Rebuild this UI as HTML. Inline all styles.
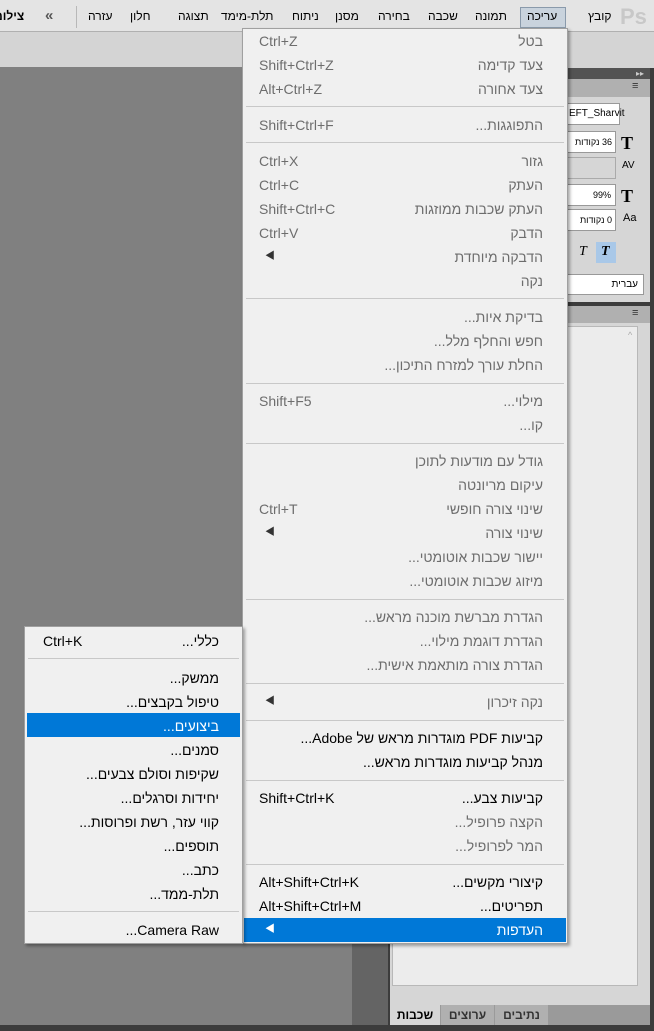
<!DOCTYPE html>
<html><head><meta charset="utf-8"><style>
*{margin:0;padding:0;box-sizing:border-box}
body{width:654px;height:1031px;overflow:hidden;background:#808080;font-family:"Liberation Sans","Noto Sans CJK SC",sans-serif;position:relative}
.abs{position:absolute}
.mb{left:0;top:0;width:654px;height:32px;background:#e4e4e4;border-bottom:1px solid #b0b0b0}
.mb span{position:absolute;top:9px;font-size:12px;color:#000;direction:rtl;white-space:nowrap}
.opt{left:0;top:32px;width:654px;height:37px;background:#d4d4d4}
.menu{background:#f0f0f0;border:1px solid #a0a0a0;box-shadow:2px 2px 3px rgba(0,0,0,.35)}
.it{position:absolute;height:24px;font-size:14px;line-height:24px;white-space:nowrap}
.r{direction:rtl}
.sep{position:absolute;height:1px;background:#c8c8c8}
.hl{position:absolute;background:#0078d7}
</style></head><body>
<div class="abs mb">
<span style="left:620px;top:4px;font-size:22px;color:#c8c8c8;font-weight:bold;direction:ltr">Ps</span>
<span style="left:588px">קובץ</span>
<div class="abs" style="left:520px;top:7px;width:46px;height:21px;background:#c9d3dd;border:1px solid #8a9aab"></div>
<span style="left:527px">עריכה</span>
<span style="left:475px">תמונה</span>
<span style="left:428px">שכבה</span>
<span style="left:378px">בחירה</span>
<span style="left:335px">מסנן</span>
<span style="left:292px">ניתוח</span>
<span style="left:221px">תלת-מימד</span>
<span style="left:178px">תצוגה</span>
<span style="left:130px">חלון</span>
<span style="left:88px">עזרה</span>
<div class="abs" style="left:76px;top:6px;width:1px;height:22px;background:#b8b8b8"></div>
<span style="left:45px;top:7px;font-size:15px;font-weight:bold;color:#555">»</span>
<span style="left:-6px;font-weight:bold">צילומ</span>
</div>
<div class="abs opt"></div>
<div class="abs" style="left:0;top:67px;width:390px;height:964px;background:#808080"></div>
<div class="abs" style="left:352px;top:940px;width:38px;height:91px;background:#646464"></div>
<div class="abs" style="left:388px;top:68px;width:266px;height:963px;background:#3c3c3c"></div>
<div class="abs" style="left:390px;top:68px;width:260px;height:11px;background:#535353"></div>
<div class="abs" style="left:636px;top:69px;font-size:8px;color:#ccc">▸▸</div>
<div class="abs" style="left:390px;top:79px;width:260px;height:18px;background:#b0b0b0"></div>
<div class="abs" style="left:632px;top:80px;font-size:11px;color:#333">≡</div>
<div class="abs" style="left:390px;top:97px;width:260px;height:205px;background:#d6d6d6"></div>
<div class="abs" style="left:566px;top:103px;width:54px;height:22px;background:#fff;border:1px solid #999;font-size:10px;line-height:20px;padding-left:2px">EFT_Sharvit</div>
<div class="abs" style="left:566px;top:131px;width:50px;height:22px;background:#fff;border:1px solid #999;font-size:9px;line-height:20px;direction:rtl;padding-right:3px;overflow:hidden">36 נקודות</div>
<div class="abs" style="left:566px;top:157px;width:50px;height:22px;background:#d6d6d6;border:1px solid #aaa"></div>
<div class="abs" style="left:566px;top:184px;width:50px;height:22px;background:#fff;border:1px solid #999;font-size:9px;line-height:20px;text-align:right;padding-right:4px">99%</div>
<div class="abs" style="left:566px;top:209px;width:50px;height:22px;background:#fff;border:1px solid #999;font-size:9px;line-height:20px;direction:rtl;padding-right:3px;overflow:hidden">0 נקודות</div>
<div class="abs" style="left:621px;top:133px;font:bold 18px 'Liberation Serif',serif">T</div>
<div class="abs" style="left:622px;top:160px;font:10px 'Liberation Sans',sans-serif">AV</div>
<div class="abs" style="left:621px;top:186px;font:bold 18px 'Liberation Serif',serif">T</div>
<div class="abs" style="left:623px;top:212px;font:11px 'Liberation Sans',sans-serif">Aa</div>
<div class="abs" style="left:596px;top:242px;width:20px;height:21px;background:#a9c8e8"></div>
<div class="abs" style="left:601px;top:244px;font:bold italic 14px 'Liberation Serif',serif">T</div>
<div class="abs" style="left:579px;top:244px;font:italic 14px 'Liberation Serif',serif">T</div>
<div class="abs" style="left:566px;top:274px;width:78px;height:21px;background:#fff;border:1px solid #999;font-size:10px;line-height:19px;direction:rtl;padding-right:5px">עברית</div>
<div class="abs" style="left:390px;top:306px;width:260px;height:17px;background:#b0b0b0"></div>
<div class="abs" style="left:632px;top:307px;font-size:11px;color:#333">≡</div>
<div class="abs" style="left:390px;top:323px;width:260px;height:682px;background:#d6d6d6"></div>
<div class="abs" style="left:392px;top:326px;width:246px;height:660px;background:#ececec;border:1px solid #b8b8b8"></div>
<div class="abs" style="left:628px;top:330px;font-size:9px;color:#aaa">^</div>
<div class="abs" style="left:390px;top:1005px;width:260px;height:20px;background:#9a9a9a"></div>
<div class="abs" style="left:390px;top:1005px;width:50px;height:20px;background:#d6d6d6;font:bold 12px sans-serif;line-height:20px;text-align:center;direction:rtl">שכבות</div>
<div class="abs" style="left:441px;top:1005px;width:53px;height:20px;background:#b0b0b0;font:bold 12px sans-serif;line-height:20px;text-align:center;color:#333">ערוצים</div>
<div class="abs" style="left:495px;top:1005px;width:53px;height:20px;background:#b0b0b0;font:bold 12px sans-serif;line-height:20px;text-align:center;color:#333">נתיבים</div>
<div class="abs" style="left:0;top:1025px;width:654px;height:6px;background:#3c3c3c"></div>

<div class="abs menu" style="left:242px;top:28px;width:326px;height:916px">
<div class="hl" style="left:1px;top:889px;width:322px;height:24px"></div>
</div>
<div id="mm"></div>
<div class="abs menu" style="left:24px;top:626px;width:219px;height:318px">
<div class="hl" style="left:2px;top:86px;width:213px;height:24px"></div>
</div>
<div id="sm"></div>
<script>
var M=[
[41,'בטל','Ctrl+Z','g'],[65,'צעד קדימה','Shift+Ctrl+Z','g'],[89,'צעד אחורה','Alt+Ctrl+Z','g'],[-106],
[125,'התפוגגות...','Shift+Ctrl+F','g'],[-142],
[161,'גזור','Ctrl+X','g'],[185,'העתק','Ctrl+C','g'],[209,'העתק שכבות ממוזגות','Shift+Ctrl+C','g'],[233,'הדבק','Ctrl+V','g'],[257,'הדבקה מיוחדת','◀','g'],[281,'נקה','','g'],[-298],
[317,'בדיקת איות...','','g'],[341,'חפש והחלף מלל...','','g'],[365,'החלת עורך למזרח התיכון...','','g'],[-383],
[401,'מילוי...','Shift+F5','g'],[425,'קו...','','g'],[-443],
[461,'גודל עם מודעות לתוכן','','g'],[485,'עיקום מריונטה','','g'],[509,'שינוי צורה חופשי','Ctrl+T','g'],[533,'שינוי צורה','◀','g'],[557,'יישור שכבות אוטומטי...','','g'],[581,'מיזוג שכבות אוטומטי...','','g'],[-599],
[617,'הגדרת מברשת מוכנה מראש...','','g'],[641,'הגדרת דוגמת מילוי...','','g'],[665,'הגדרת צורה מותאמת אישית...','','g'],[-683],
[702,'נקה זיכרון','◀','g'],[-720],
[738,'קביעות PDF מוגדרות מראש של Adobe...','','k'],[762,'מנהל קביעות מוגדרות מראש...','','k'],[-780],
[798,'קביעות צבע...','Shift+Ctrl+K','k'],[822,'הקצה פרופיל...','','g'],[846,'המר לפרופיל...','','g'],[-864],
[882,'קיצורי מקשים...','Alt+Shift+Ctrl+K','k'],[906,'תפריטים...','Alt+Shift+Ctrl+M','k'],[930,'העדפות','◀','w']];
var S=[[641,'כללי...','Ctrl+K'],[-658],[678,'ממשק...'],[702,'טיפול בקבצים...'],[726,'ביצועים...','','w'],[750,'סמנים...'],[774,'שקיפות וסולם צבעים...'],[798,'יחידות וסרגלים...'],[822,'קווי עזר, רשת ופרוסות...'],[846,'תוספים...'],[870,'כתב...'],[894,'תלת-ממד...'],[-911],[930,'Camera Raw...']];
function build(L,x1,sl,sx0,sx1){var h='';L.forEach(function(a){
if(a[0]<0){h+='<div class="sep" style="left:'+sx0+'px;width:'+(sx1-sx0)+'px;top:'+(-a[0])+'px"></div>';return;}
var c=a[3]=='w'?'color:#fff':(a[3]=='g'?'color:#6d6d6d':'color:#000');var t=a[0]-12;
h+='<div class="it r" style="right:'+(654-x1)+'px;top:'+t+'px;'+c+'">'+a[1]+'</div>';
if(a[2]){if(a[2]=='◀')h+='<div class="it" style="left:'+(sl+6)+'px;top:'+t+'px;font-size:10px;'+(a[3]=='w'?'color:#fff':'color:#333')+'">◀</div>';
else h+='<div class="it" style="left:'+sl+'px;top:'+t+'px;'+c+'">'+a[2]+'</div>';}
});return h;}
document.getElementById('mm').innerHTML=build(M,543,259,246,564);
document.getElementById('sm').innerHTML=build(S,219,43,28,239);
</script>
</body></html>
